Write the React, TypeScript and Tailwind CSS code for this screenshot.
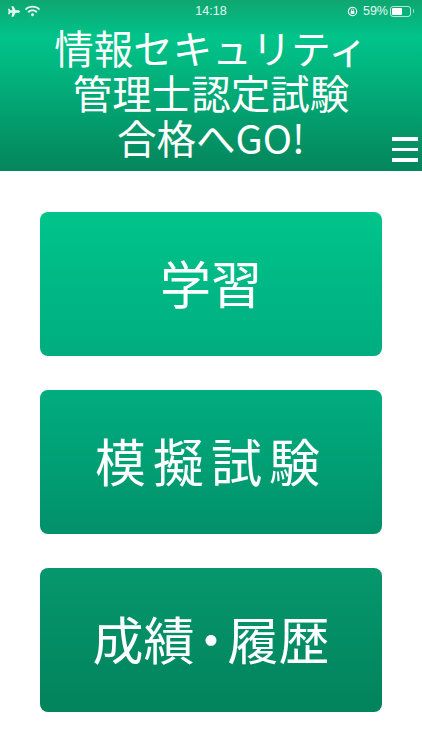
import { FaPlane, FaWifi } from "react-icons/fa";

const cjk = "font-['Noto_Sans_CJK_JP','Noto_Sans',sans-serif]";
const menuButton =
  "flex h-[144px] w-[342px] items-center justify-center rounded-[8px] pb-[3px] text-[51px] font-normal text-white";

function StatusBar() {
  return (
    <div className="grid h-[22px] grid-cols-3 items-center px-[8px] font-['Liberation_Sans',sans-serif] text-[12.5px] text-white/90">
      <div className="flex items-center gap-[5px]">
        <FaPlane className="h-[11px] w-[12px]" />
        <FaWifi className="h-[12px] w-[15px]" />
      </div>
      <div className="text-center">14:18</div>
      <div className="flex items-center justify-end gap-[2px]">
        <svg viewBox="0 0 12 12" className="mr-[3px] h-[11px] w-[11px]">
          <circle cx="6" cy="6" r="4.6" fill="none" stroke="white" strokeWidth="1.2" />
          <rect x="4" y="5.5" width="4" height="3" fill="white" />
          <path d="M4.8 5.5V4.4a1.2 1.2 0 0 1 2.4 0v1.1" fill="none" stroke="white" strokeWidth="0.8" />
        </svg>
        <span>59%</span>
        <div className="flex h-[11px] w-[21px] items-center rounded-[3px] border border-white/70 p-[1px]">
          <div className="h-full w-[59%] rounded-[1px] bg-white" />
        </div>
        <div className="h-[4px] w-[1px] rounded-r bg-white/60" />
      </div>
    </div>
  );
}

export default function App() {
  return (
    <main className={`h-[750px] w-[422px] overflow-hidden bg-white ${cjk}`}>
      <header className="relative h-[171px] bg-[linear-gradient(to_bottom,#0fa671_0%,#00c48a_22%,#05855b_100%)]">
        <StatusBar />
        <h1 className="mt-[2px] text-center text-[39.5px] font-normal leading-[45px] text-white">
          情報セキュリティ
          <br />
          管理士認定試験
          <br />
          合格へGO!
        </h1>
        <button type="button" className="absolute left-[392px] top-[137px] flex w-[26px] flex-col gap-[7px]">
          <span className="h-[3.5px] bg-white" />
          <span className="h-[3.5px] bg-white" />
          <span className="h-[3.5px] bg-white" />
        </button>
      </header>

      <nav className="mt-[41px] flex flex-col gap-[34px] px-[40px]">
        <button type="button" className={`${menuButton} bg-[linear-gradient(to_bottom,#00c48b,#00ad7f)]`}>
          学習
        </button>
        <button type="button" className={`${menuButton} tracking-[7px] bg-[linear-gradient(to_bottom,#00ad7f,#02916a)]`}>
          模擬試験
        </button>
        <button type="button" className={`${menuButton} bg-[linear-gradient(to_bottom,#06976d,#02835b)]`}>
          成績<span className="mx-[-9px]">・</span>履歴
        </button>
      </nav>
    </main>
  );
}
